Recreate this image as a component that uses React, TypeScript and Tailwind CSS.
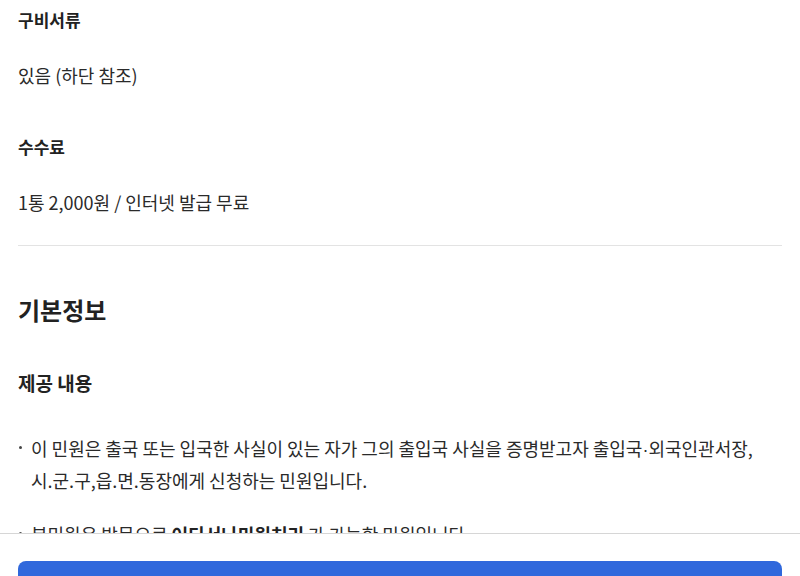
export default function App() {
  return (
    <div className="min-h-screen bg-white font-['Noto_Sans_CJK_KR',sans-serif] text-[#222]">
      <div className="px-[18px] pt-[7px] pb-[80px]">
        {/* 구비서류 / 수수료 */}
        <div>
          <h3 className="text-[17px] font-bold leading-[26px]">구비서류</h3>
          <p className="mt-[29px] text-[18px] leading-[26px] text-[#2a2a2a]">있음 (하단 참조)</p>
          <h3 className="mt-[46px] text-[17px] font-bold leading-[26px]">수수료</h3>
          <p className="mt-[29px] text-[18px] leading-[26px] text-[#2a2a2a]">1통 2,000원 / 인터넷 발급 무료</p>
        </div>

        <div className="mt-[30px] border-t border-[#e3e3e3]" />

        {/* 기본정보 */}
        <h2 className="mt-[47px] text-[24px] font-bold leading-[34px]">기본정보</h2>
        <h3 className="mt-[42px] text-[19px] font-bold leading-[28px]">제공 내용</h3>

        <ul className="mt-[36px] text-[18px] leading-[30px] text-[#2a2a2a]">
          <li className="flex">
            <span className="flex w-[13px] shrink-0 pt-[13px] pl-[1px]">
              <span className="h-[3px] w-[3px] rounded-full bg-[#444]" />
            </span>
            <span>
              이 민원은 출국 또는 입국한 사실이 있는 자가 그의 출입국 사실을 증명받고자 출입국
              <span className="font-['Liberation_Sans',sans-serif]">·</span>외국인관서장,
              <br />
              시.군.구,읍.면.동장에게 신청하는 민원입니다.
            </span>
          </li>
          <li className="mt-[24px] flex">
            <span className="flex w-[13px] shrink-0 pt-[13px] pl-[1px]">
              <span className="h-[3px] w-[3px] rounded-full bg-[#444]" />
            </span>
            <span>
              본민원은 방문으로 <b className="font-bold text-[#222]">어디서나민원처리</b> 가 가능한 민원입니다.
            </span>
          </li>
        </ul>
      </div>

      {/* 하단 고정 버튼 */}
      <div className="fixed bottom-0 left-0 right-0 h-[43px] overflow-hidden border-t border-[#d6d6d6] bg-white px-[18px] pt-[27px]">
        <button
          type="button"
          aria-label="신청하기"
          className="h-[52px] w-full rounded-[8px] bg-[#3068dc]"
        />
      </div>
    </div>
  )
}
